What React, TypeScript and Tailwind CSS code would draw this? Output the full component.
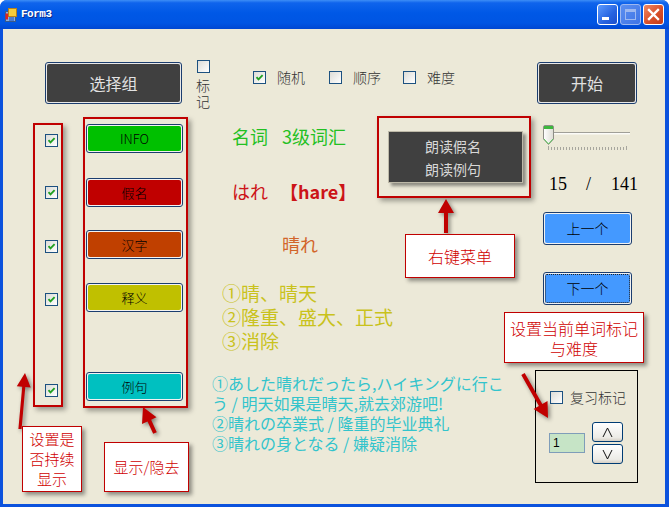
import React from 'react';

// one arrow as a polygon: tail -> tip, with a triangular head
const arrowPoints = (x1: number, y1: number, x2: number, y2: number, head = 15, half = 8, w = 2) => {
  const dx = x2 - x1;
  const dy = y2 - y1;
  const len = Math.hypot(dx, dy);
  const ux = dx / len;
  const uy = dy / len;
  const px = -uy;
  const py = ux;
  const bx = x2 - ux * head;
  const by = y2 - uy * head;
  const pts = [
    [x1 + px * w, y1 + py * w],
    [bx + px * w, by + py * w],
    [bx + px * half, by + py * half],
    [x2, y2],
    [bx - px * half, by - py * half],
    [bx - px * w, by - py * w],
    [x1 - px * w, y1 - py * w],
  ];
  return pts.map((p) => p.map((n) => n.toFixed(1)).join(',')).join(' ');
};

const CheckBox = ({ checked = false }: { checked?: boolean }) => (
  <div className="relative h-[13px] w-[13px] shrink-0 border border-[#1C5180] bg-[linear-gradient(135deg,#DCDCD7,#FFFFFF)]">
    {checked && (
      <svg className="absolute left-0 top-0" width="11" height="11" viewBox="0 0 11 11">
        <path d="M2.5 5.2 L4.5 7.3 L8.6 3.2" fill="none" stroke="#21A121" strokeWidth="1.9" />
      </svg>
    )}
  </div>
);

const DarkButton = ({ label, className = '' }: { label: string; className?: string }) => (
  <div className={`h-[42px] shrink-0 rounded-[3px] border border-[#1B3D6E] bg-[#E8E8E8] p-px ${className}`}>
    <div className="flex h-full items-center justify-center rounded-[2px] bg-[#404040] text-[16px] text-[#E2E2E2]">
      {label}
    </div>
  </div>
);

const ToggleButton = ({ label, bg, className = '' }: { label: string; bg: string; className?: string }) => (
  <div className={`ml-px h-[29px] w-[97px] rounded-[3px] border border-[#1B3D6E] bg-[#F2F2F2] p-px ${className}`}>
    <div className={`flex h-full items-center justify-center rounded-[2px] text-[13px] font-light text-black ${bg}`}>{label}</div>
  </div>
);

const BlueButton = ({ label, focused = false, className = '' }: { label: string; focused?: boolean; className?: string }) => (
  <div className={`h-[33px] w-[89px] rounded-[3px] border border-[#1B3D6E] bg-[#F2F2F2] p-px ${className}`}>
    <div
      className={`flex h-full items-center justify-center rounded-[2px] bg-[#4499FF] text-[14px] font-light text-black ${
        focused ? 'border border-dotted border-[#222]' : ''
      }`}
    >
      {label}
    </div>
  </div>
);

const SpinButton = ({ up }: { up?: boolean }) => (
  <div className="flex h-[20px] w-[31px] items-center justify-center rounded-[3px] border border-[#003C74] bg-[linear-gradient(to_bottom,#FFFFFF,#ECEBE6_80%,#D6D0C5)]">
    <svg width="11" height="11" viewBox="0 0 11 11">
      <path d={up ? 'M1 10 L5.5 1 L10 10' : 'M1 1 L5.5 10 L10 1'} fill="none" stroke="#111" strokeWidth="1" />
    </svg>
  </div>
);

const Slider = () => {
  const ticks = Array.from({ length: 27 }, (_, i) => 6 + i * 3);
  return (
    <svg width="90" height="26" viewBox="0 0 90 26">
      <rect x="4" y="7" width="84" height="1" fill="#A09F98" />
      <rect x="4" y="8" width="84" height="1.5" fill="#FBFBF8" />
      {ticks.map((x, i) => (
        <rect key={i} x={x} y={i === 0 || i === ticks.length - 1 ? 21 : 22} width="1" height={i === 0 || i === ticks.length - 1 ? 4 : 3} fill="#A7A69E" />
      ))}
      <defs>
        <linearGradient id="thumb" x1="0" y1="0" x2="1" y2="0">
          <stop offset="0" stopColor="#FFFFFF" />
          <stop offset="1" stopColor="#DEDDD5" />
        </linearGradient>
      </defs>
      <path d="M1.5 2 Q1.5 0.5 3 0.5 H10 Q11.5 0.5 11.5 2 V14 L6.5 19.5 L1.5 14 Z" fill="url(#thumb)" stroke="#8E8E86" />
      <rect x="2" y="1" width="9" height="3" fill="#3DB83D" />
      <path d="M2 14 L6.5 19 L11 14" fill="none" stroke="#5AC85A" strokeWidth="1" />
    </svg>
  );
};

const TitleBar = () => (
  <div className="flex h-[29px] shrink-0 items-center bg-[linear-gradient(to_bottom,#3D8EF6_0%,#0F64EC_10%,#0058E6_45%,#0055E3_80%,#0047D2_100%)] pl-[5px] pr-[5px]">
    <svg width="12" height="14" viewBox="0 0 12 14">
      <rect x="0.5" y="3.5" width="10" height="10" fill="#8EAFD8" stroke="#3A5A8A" />
      <rect x="3.5" y="0.5" width="8" height="8" fill="#F6CC3C" stroke="#B8801A" />
      <rect x="0.5" y="5.5" width="2.5" height="6" fill="#E02020" />
      <rect x="4" y="9" width="5" height="4" fill="#4A7BD0" />
    </svg>
    <span className="ml-[4px] font-['Liberation_Mono',monospace] text-[11px] font-bold tracking-[-0.5px] text-white [text-shadow:1px_1px_0_#0A2A8A]">
      Form3
    </span>
    <div className="ml-auto flex gap-[2px]">
      <div className="relative h-[21px] w-[21px] rounded-[3px] border border-white bg-[linear-gradient(135deg,#5C9BFF,#2663E0_60%,#1B4FCC)]">
        <div className="absolute bottom-[4px] left-[4px] h-[3px] w-[7px] bg-white" />
      </div>
      <div className="flex h-[21px] w-[21px] items-center justify-center rounded-[3px] border border-[#9DB8F0] bg-[linear-gradient(135deg,#5B8FF0,#3F74E6)]">
        <div className="h-[11px] w-[11px] border border-t-[3px] border-[#9DB8F0]" />
      </div>
      <div className="flex h-[21px] w-[21px] items-center justify-center rounded-[3px] border border-white bg-[linear-gradient(135deg,#F08A64,#D8502A_55%,#C23A18)]">
        <svg width="13" height="13" viewBox="0 0 13 13">
          <path d="M2 2 L11 11 M11 2 L2 11" stroke="white" strokeWidth="2.4" strokeLinecap="square" />
        </svg>
      </div>
    </div>
  </div>
);

const redFrame = 'border-2 border-[#C00000] shadow-[3px_3px_5px_rgba(0,0,0,0.35)]';
const note = 'flex flex-col items-center justify-center border border-[#C00000] bg-white font-light text-[#D00000] shadow-[3px_3px_4px_rgba(0,0,0,0.4)]';

export default function App() {
  return (
    <div className="h-[507px] w-[669px] bg-white font-['Noto_Sans_CJK_SC','Noto_Sans',sans-serif]">
      <div className="flex h-full w-full flex-col overflow-hidden rounded-t-[7px] bg-[#0B52DD]">
        <TitleBar />
        <div className="relative ml-[3px] h-[475px] w-[662px] bg-[#ECE9D8]">
          {/* top row */}
          <div className="flex h-[87px] items-start pt-[31px]">
            <DarkButton label="选择组" className="ml-[42px] mt-[2px] w-[137px]" />
            <div className="ml-[15px] flex w-[14px] flex-col">
              <CheckBox />
              <div className="ml-[-1px] mt-[4px] text-[14px] font-light leading-[16px] text-[#333]">
                标<br />记
              </div>
            </div>
            <div className="ml-[42px] mt-[10px] flex items-center text-[14px] font-light leading-[14px] text-[#333]">
              <CheckBox checked />
              <span className="ml-[11px]">随机</span>
              <div className="ml-[24px]">
                <CheckBox />
              </div>
              <span className="ml-[11px]">顺序</span>
              <div className="ml-[22px]">
                <CheckBox />
              </div>
              <span className="ml-[11px]">难度</span>
            </div>
            <DarkButton label="开始" className="ml-auto mr-[28px] mt-[2px] w-[100px]" />
          </div>

          {/* lower row */}
          <div className="flex items-start">
            <div className={`ml-[30px] mt-[7px] flex h-[284px] w-[30px] flex-col pl-[10px] ${redFrame}`}>
              <div className="mt-[9px]"><CheckBox checked /></div>
              <div className="mt-[39px]"><CheckBox checked /></div>
              <div className="mt-[41px]"><CheckBox checked /></div>
              <div className="mt-[40px]"><CheckBox checked /></div>
              <div className="mt-[78px]"><CheckBox checked /></div>
            </div>

            <div className={`ml-[20px] mt-[1px] flex h-[291px] w-[105px] flex-col ${redFrame}`}>
              <ToggleButton label="INFO" bg="bg-[#00C000]" className="mt-[5px]" />
              <ToggleButton label="假名" bg="bg-[#C00000]" className="mt-[25px]" />
              <ToggleButton label="汉字" bg="bg-[#C04000]" className="mt-[23px]" />
              <ToggleButton label="释义" bg="bg-[#C0C000]" className="mt-[24px]" />
              <ToggleButton label="例句" bg="bg-[#00C0C0]" className="mt-[60px]" />
            </div>

            {/* middle */}
            <div className="flex w-[349px] flex-col whitespace-nowrap">
              <div className="flex items-start">
                <div className="flex w-[189px] flex-col text-[18px] leading-[24px]">
                  <div className="ml-[44px] mt-[8px] text-[#22C022]">
                    <span>名词</span>
                    <span className="ml-[14px]">3级词汇</span>
                  </div>
                  <div className="ml-[44px] mt-[31px] text-[#CC1418]">
                    <span>はれ</span>
                    <span className="ml-[12px] font-bold">【hare】</span>
                  </div>
                  <div className="ml-[94px] mt-[29px] text-[#D2652A]">晴れ</div>
                </div>
                <div className={`h-[82px] w-[154px] ${redFrame}`}>
                  <div className="ml-[9px] mt-[13px] flex h-[52px] w-[135px] flex-col justify-center gap-[7px] border border-[#BDB9A8] bg-[#404040] pl-[36px] text-[14px] leading-[16px] text-[#D8D8D8] shadow-[3px_3px_3px_rgba(0,0,0,0.4)]">
                    <span>朗读假名</span>
                    <span>朗读例句</span>
                  </div>
                </div>
              </div>
              <div className="ml-[34px] mt-[25px] text-[19px] leading-[24px] text-[#C9C21C]">
                <div>①晴、晴天</div>
                <div>②隆重、盛大、正式</div>
                <div>③消除</div>
              </div>
              <div className="ml-[24px] mt-[20px] text-[16px] leading-[20px] text-[#33C4CC]">
                <div>①あした晴れだったら,ハイキングに行こ</div>
                <div>う / 明天如果是晴天,就去郊游吧!</div>
                <div>②晴れの卒業式 / 隆重的毕业典礼</div>
                <div>③晴れの身となる / 嫌疑消除</div>
              </div>
            </div>

            {/* right */}
            <div className="flex w-[108px] flex-col">
              <div className="ml-[5px] mt-[9px]">
                <Slider />
              </div>
              <div className="ml-[12px] mt-[23px] flex font-['Liberation_Serif',serif] text-[18px] leading-[20px] text-black">
                <span>15</span>
                <span className="ml-[19px]">/</span>
                <span className="ml-[20px]">141</span>
              </div>
              <BlueButton label="上一个" className="ml-[6px] mt-[18px]" />
              <BlueButton label="下一个" focused className="ml-[6px] mt-[27px]" />
              <div className="ml-[-2px] mt-[65px] flex h-[113px] w-[103px] flex-col border border-black">
                <div className="ml-[14px] mt-[20px] flex items-center">
                  <CheckBox />
                  <span className="ml-[7px] text-[14px] font-light leading-[13px] text-[#333]">复习标记</span>
                </div>
                <div className="ml-[13px] mt-[18px] flex items-start">
                  <div className="mt-[11px] flex h-[20px] w-[36px] items-center border border-[#7F9DB9] bg-[#C6E4C6] pl-[3px] font-['Liberation_Sans',sans-serif] text-[12px] text-black">
                    1
                  </div>
                  <div className="ml-[7px] flex flex-col gap-[2px]">
                    <SpinButton up />
                    <SpinButton />
                  </div>
                </div>
              </div>
            </div>
          </div>

          {/* annotations laid over the form */}
          <svg className="pointer-events-none absolute left-0 top-0 drop-shadow-[2px_2px_2px_rgba(0,0,0,0.45)]" width="662" height="475">
            <polygon points={arrowPoints(443, 204, 443, 170, 14, 8, 2)} fill="#C00000" />
            <polygon points={arrowPoints(17, 400, 22, 344, 14, 7, 1.6)} fill="#C00000" />
            <polygon points={arrowPoints(152, 404, 140, 378, 15, 8, 2)} fill="#C00000" />
            <polygon points={arrowPoints(520, 345, 545, 389, 15, 8, 2)} fill="#C00000" />
          </svg>
          <div className={`absolute left-[402px] top-[205px] h-[44px] w-[110px] text-[16px] ${note}`}>右键菜单</div>
          <div className={`absolute left-[501px] top-[283px] h-[51px] w-[140px] text-[16px] leading-[20px] ${note}`}>
            <span>设置当前单词标记</span>
            <span>与难度</span>
          </div>
          <div className={`absolute left-[19px] top-[397px] h-[66px] w-[60px] text-[15px] leading-[20px] ${note}`}>
            <span>设置是</span>
            <span>否持续</span>
            <span>显示</span>
          </div>
          <div className={`absolute left-[101px] top-[413px] h-[50px] w-[85px] text-[15px] ${note}`}>显示/隐去</div>
        </div>
      </div>
    </div>
  );
}
